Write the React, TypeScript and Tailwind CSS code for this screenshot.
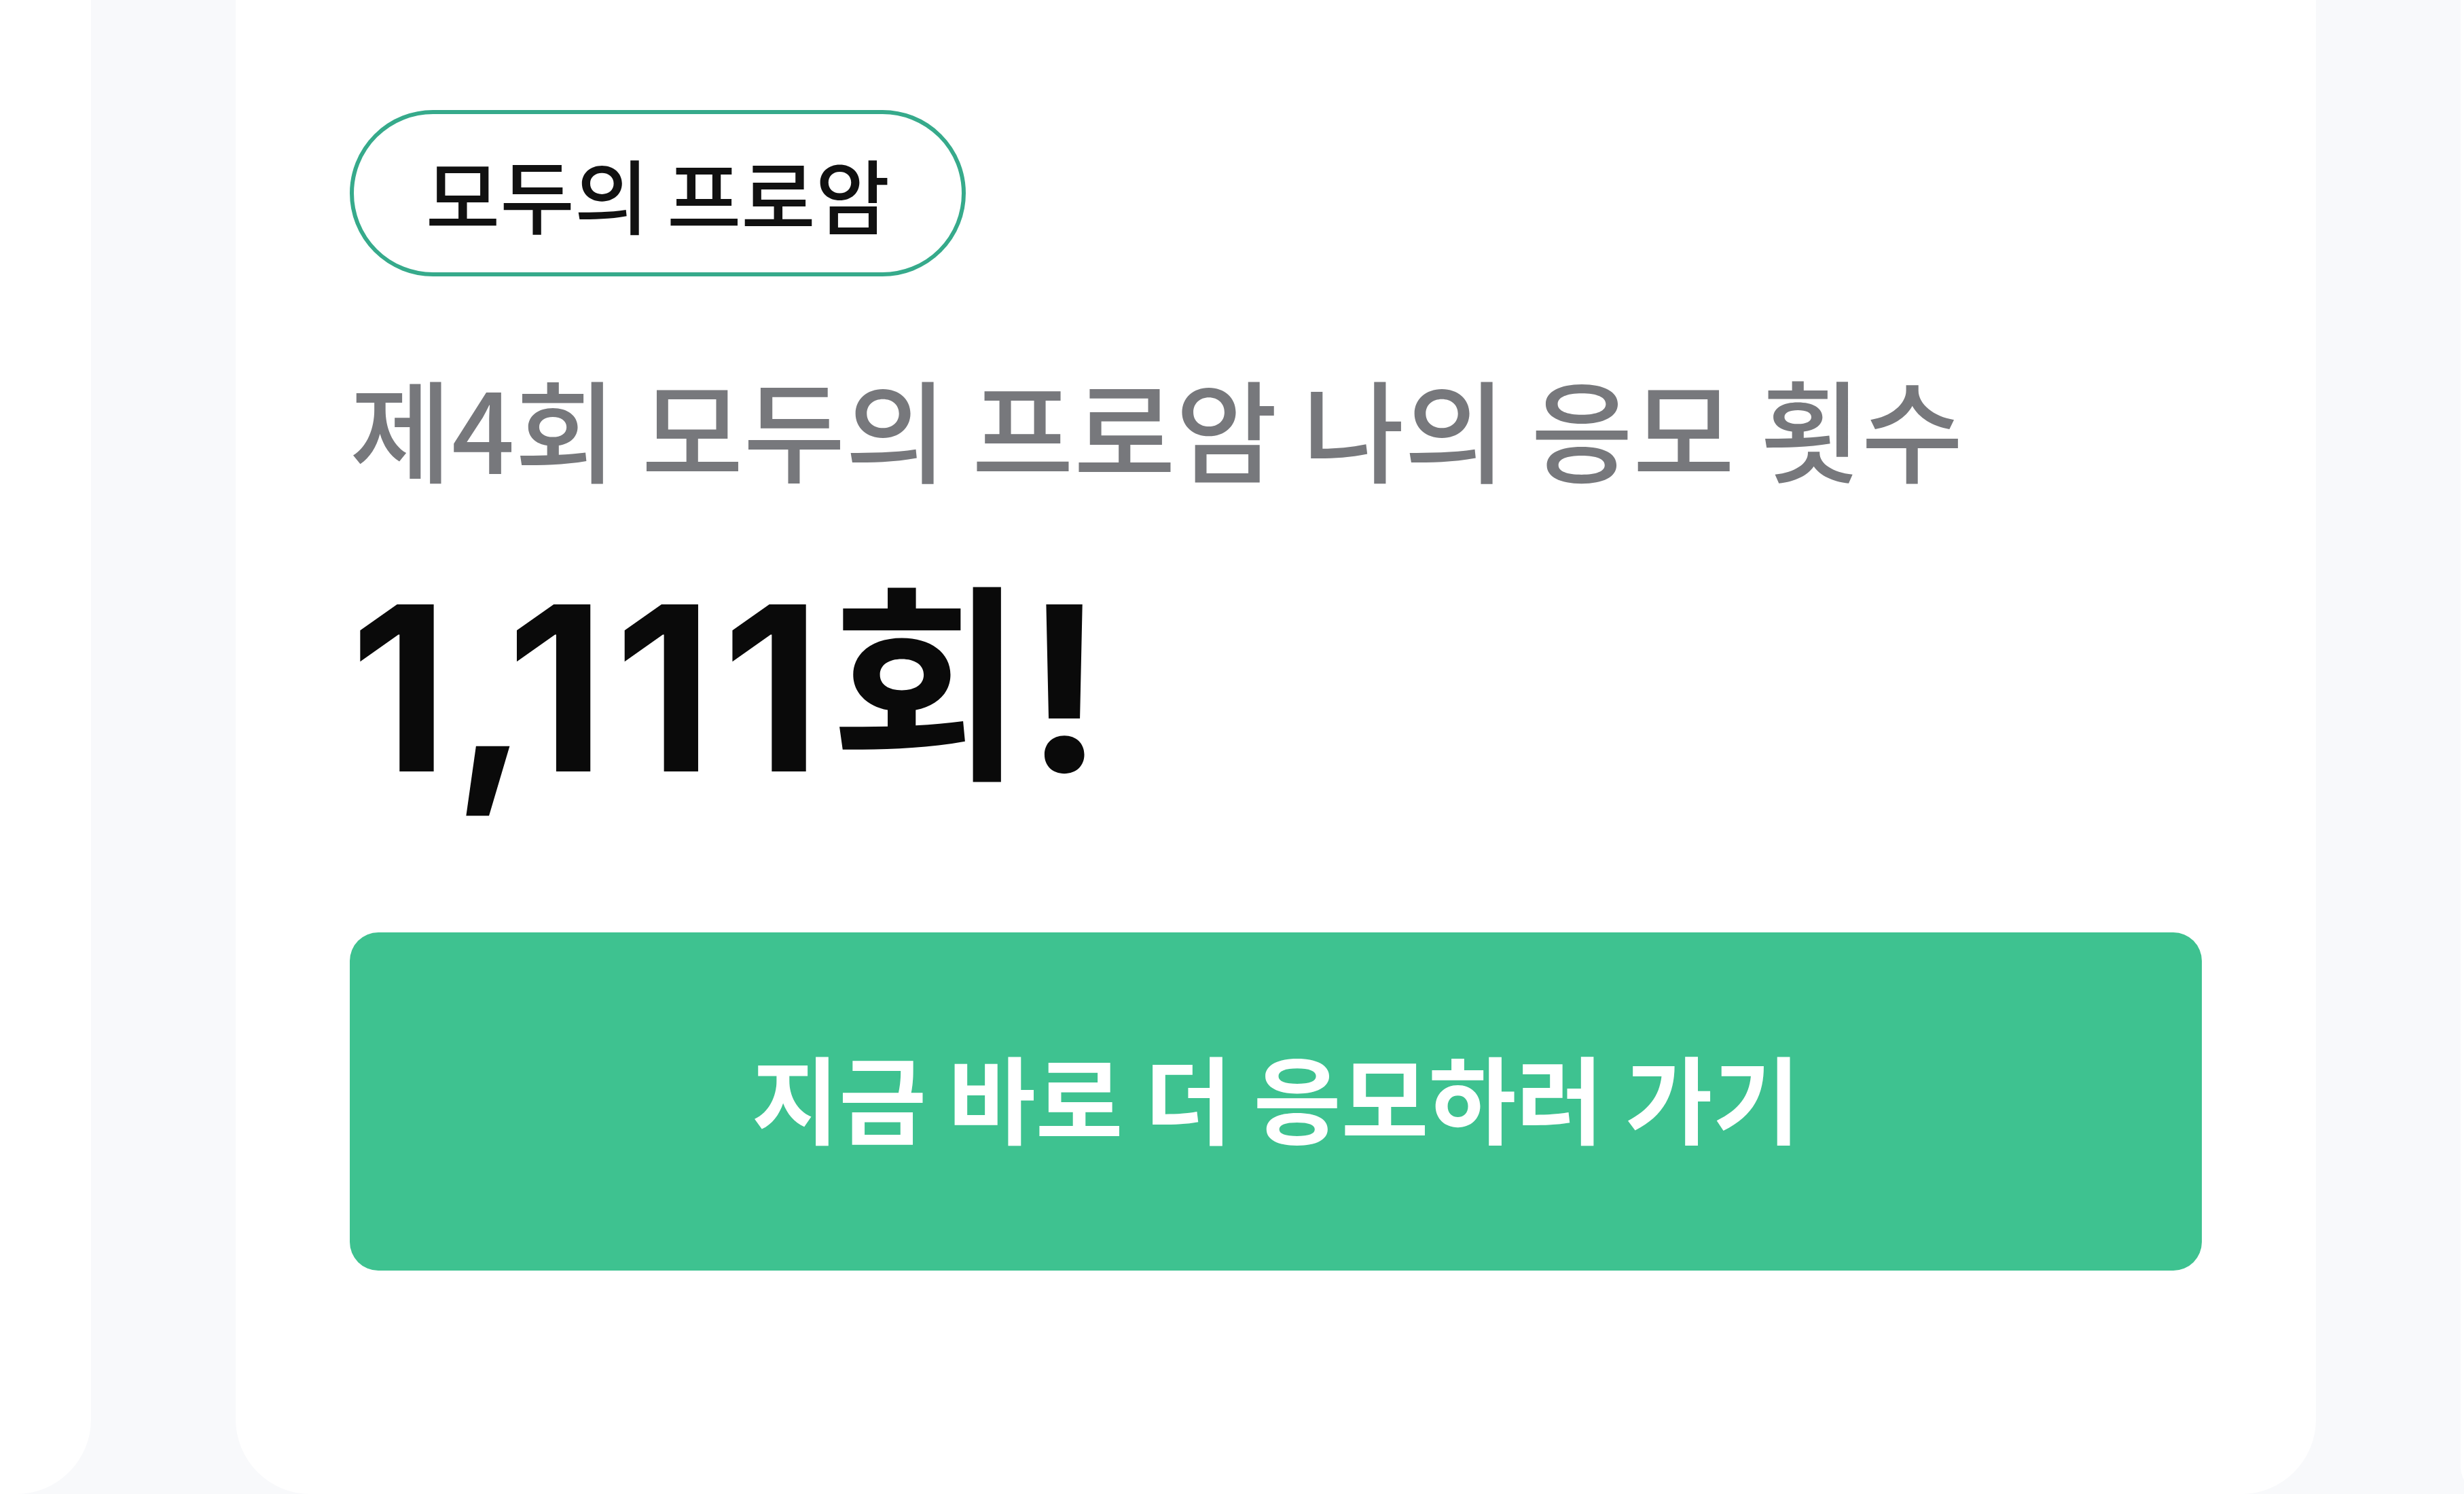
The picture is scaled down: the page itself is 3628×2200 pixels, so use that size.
export default function App() {
  return (
    <div
      className="flex h-[2200px] w-[3628px] gap-[213px] overflow-hidden bg-[#f8f9fb]"
      style={{ fontFamily: '"Noto Sans CJK KR", "Noto Sans", sans-serif' }}
    >
      {/* previous card peeking in */}
      <div className="h-full w-[134px] shrink-0 rounded-br-[110px] bg-white" />

      {/* main card */}
      <div className="flex h-full w-[3063px] shrink-0 flex-col items-start rounded-b-[110px] bg-white px-[168px] pt-[162px]">
        <div className="flex h-[245px] w-[907px] items-center justify-center rounded-full border-[6px] border-[#36aa8b] text-[119px] font-medium leading-none text-[#111]">
          모두의 프로암
        </div>

        <p className="mt-[139px] text-[163px] font-medium leading-none text-[#77787c]">
          제4회 모두의 프로암 나의 응모 횟수
        </p>

        <p
          className="mt-[136px] text-[338px] font-bold leading-none tracking-[13px] text-[#0a0a0a]"
          style={{ fontFamily: 'Inter, "Noto Sans CJK KR", sans-serif' }}
        >
          <span className="tracking-[6px]">1</span>
          <span className="tracking-[-34px]">,</span>
          111
          <span className="align-[12px] text-[310px] tracking-[3px]">회</span>!
        </p>

        <button className="mt-[190px] flex h-[498px] w-full items-center justify-center rounded-[42px] bg-[#3ec290] pb-[18px] text-[140px] font-semibold leading-none text-white">
          지금 바로 더 응모하러 가기
        </button>
      </div>

      {/* next card peeking in */}
      <div className="h-full w-[40px] shrink-0 rounded-bl-[110px] bg-white" />
    </div>
  );
}
